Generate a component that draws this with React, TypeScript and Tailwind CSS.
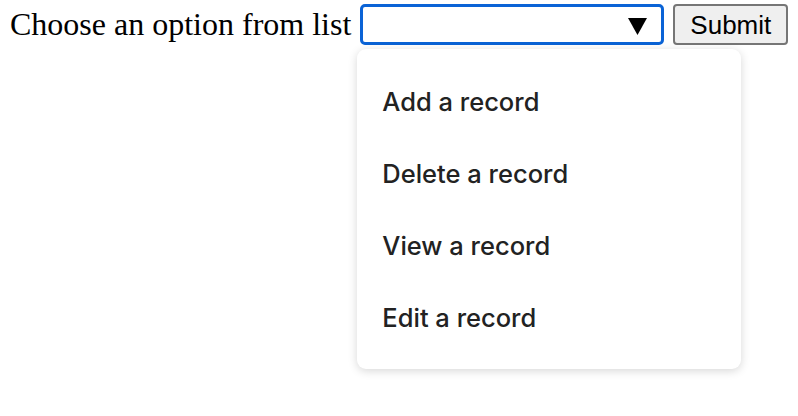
const options = ["Add a record", "Delete a record", "View a record", "Edit a record"]

export default function App() {
  return (
    <div className="min-h-[416px] bg-white pl-[10px] pt-[4px]">
      <div className="flex items-center">
        <span className="text-[32px] leading-[37px] text-black font-['Liberation_Serif','Times_New_Roman',serif]">
          Choose an option from list
        </span>

        <div className="relative ml-[9px]">
          <div className="flex h-[41px] w-[304px] items-center justify-end rounded-[5px] border-[3px] border-[#0a63d6] bg-white pr-[14px]">
            <svg width="19" height="17" viewBox="0 0 19 17" className="mt-[3px]">
              <polygon points="0,0 19,0 9.5,17" fill="#000" />
            </svg>
          </div>

          <div className="absolute left-[-3px] top-[45px] w-[384px] rounded-[9px] bg-white pb-[15px] pt-[17px] shadow-[0_2px_10px_rgba(0,0,0,0.16)]">
            {options.map((opt) => (
              <div
                key={opt}
                className="flex h-[72px] items-center pl-[25px] text-[25.5px] font-medium text-[#222] font-['Inter','Liberation_Sans',sans-serif]"
              >
                {opt}
              </div>
            ))}
          </div>
        </div>

        <button className="ml-[9px] h-[41px] w-[115px] rounded-[4px] border-2 border-[#767676] bg-[#efefef] text-[26px] leading-none text-black font-['Liberation_Sans',Arial,sans-serif]">
          Submit
        </button>
      </div>
    </div>
  )
}
